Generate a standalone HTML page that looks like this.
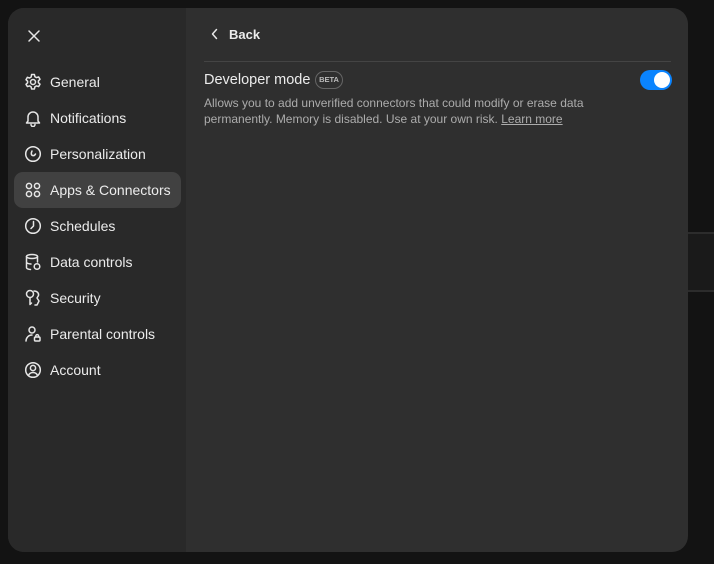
<!DOCTYPE html>
<html><head><style>
*{margin:0;padding:0;box-sizing:border-box}
body{width:714px;height:564px;background:#131313;font-family:"Liberation Sans",sans-serif;position:relative;overflow:hidden}
.ext{position:absolute;left:688px;width:26px;background:#1a1a1a}
.modal{position:absolute;left:8px;top:8px;width:680px;height:544px;border-radius:16px;overflow:hidden;background:#2f2f2f}
.side{position:absolute;left:0;top:0;width:178px;height:544px;background:#292929}
.item{position:absolute;left:6px;width:167px;height:36px;border-radius:9px;color:#ececec;font-size:14px;line-height:36px;padding-left:36px}
.item svg{position:absolute;left:10px;top:9px}
.act{background:#414141}
svg{fill:none;stroke:#e6e6e6;stroke-width:1.5;stroke-linecap:round;stroke-linejoin:round}
</style></head><body>
<div class="ext" style="top:232px;height:2px;background:#2c2c2c"></div>
<div class="ext" style="top:234px;height:56px"></div>
<div class="ext" style="top:290px;height:2px;background:#2c2c2c"></div>
<div class="modal">
<div class="side">
<svg style="position:absolute;left:19px;top:21px" width="14" height="14" viewBox="0 0 14 14"><path d="M2 2L12 12M12 2L2 12"/></svg>
<div class="item" style="top:56px"><svg width="18" height="18" viewBox="0 0 18 18"><circle cx="9" cy="9" r="2.5"/><path d="M7.6 1.5h2.8l.5 2.2 1.6.9 2.1-.7 1.4 2.4-1.6 1.5v1.9l1.6 1.5-1.4 2.4-2.1-.7-1.6.9-.5 2.2H7.6l-.5-2.2-1.6-.9-2.1.7L2 11.3l1.6-1.5V8.2L2 6.7l1.4-2.4 2.1.7 1.6-.9z"/></svg>General</div>
<div class="item" style="top:92px"><svg width="18" height="18" viewBox="0 0 18 18"><path d="M4 12V8a5 5 0 0110 0v4l1.5 2h-13zM7 15.5a2 2 0 004 0"/></svg>Notifications</div>
<div class="item" style="top:128px"><svg width="18" height="18" viewBox="0 0 18 18"><circle cx="9" cy="9" r="7.3"/><path d="M8 6c-1 2-1 4 .5 4.5s2.5-.5 3-1.5"/></svg>Personalization</div>
<div class="item act" style="top:164px"><svg width="18" height="18" viewBox="0 0 18 18"><circle cx="5" cy="5" r="2.6"/><circle cx="13" cy="5" r="2.6"/><circle cx="5" cy="13" r="2.6"/><circle cx="13" cy="13" r="2.6"/></svg>Apps &amp; Connectors</div>
<div class="item" style="top:200px"><svg width="18" height="18" viewBox="0 0 18 18"><circle cx="9" cy="9" r="7.3"/><path d="M9.5 4.5V9L7 11.5"/></svg>Schedules</div>
<div class="item" style="top:236px"><svg width="18" height="18" viewBox="0 0 18 18"><ellipse cx="8" cy="3.5" rx="5.5" ry="2"/><path d="M2.5 3.5v11c0 1 1.5 1.8 4 2M13.5 3.5V9M2.5 9c0 1 2 2 4.5 2"/><circle cx="13" cy="13.5" r="2.8"/></svg>Data controls</div>
<div class="item" style="top:272px"><svg width="18" height="18" viewBox="0 0 18 18"><circle cx="6" cy="5" r="3.5"/><path d="M6 8.5v7l1.5-1.5M10 2c3 0 5 2 4.5 4.5L13 9l2 3-2 4h-2"/></svg>Security</div>
<div class="item" style="top:308px"><svg width="18" height="18" viewBox="0 0 18 18"><circle cx="8" cy="5" r="3"/><path d="M2 16c0-3 2.5-6 6-6"/><rect x="10.5" y="12" width="5.5" height="4" rx="1"/><path d="M11.8 12v-1a1.4 1.4 0 012.8 0v1"/></svg>Parental controls</div>
<div class="item" style="top:344px"><svg width="18" height="18" viewBox="0 0 18 18"><circle cx="9" cy="9" r="7.3"/><circle cx="9" cy="7" r="2.6"/><path d="M4.3 14.5c1-2 2.6-3 4.7-3s3.7 1 4.7 3"/></svg>Account</div>
</div>
<svg style="position:absolute;left:202px;top:20px" width="10" height="12" viewBox="0 0 10 12"><path d="M6.5 1.5L2.5 6l4 4.5"/></svg>
<div style="position:absolute;left:221px;top:19px;color:#ececec;font-size:13px;font-weight:bold">Back</div>
<div style="position:absolute;left:196px;top:53px;width:467px;height:1px;background:#444"></div>
<div style="position:absolute;left:196px;top:64px;color:#ececec;font-size:14.5px">Developer mode</div>
<div style="position:absolute;left:307px;top:63px;width:28px;height:18px;border:1px solid #666;border-radius:9px;color:#bbb;font-size:7.5px;font-weight:bold;text-align:center;line-height:16px">BETA</div>
<div style="position:absolute;left:632px;top:62px;width:32px;height:20px;border-radius:10px;background:#0a84ff"><div style="position:absolute;right:2px;top:2px;width:16px;height:16px;border-radius:50%;background:#fff"></div></div>
<div style="position:absolute;left:196px;top:87px;width:420px;color:#acacac;font-size:12px;line-height:16px">Allows you to add unverified connectors that could modify or erase data permanently. Memory is disabled. Use at your own risk. <u>Learn more</u></div>
</div>
</body></html>
